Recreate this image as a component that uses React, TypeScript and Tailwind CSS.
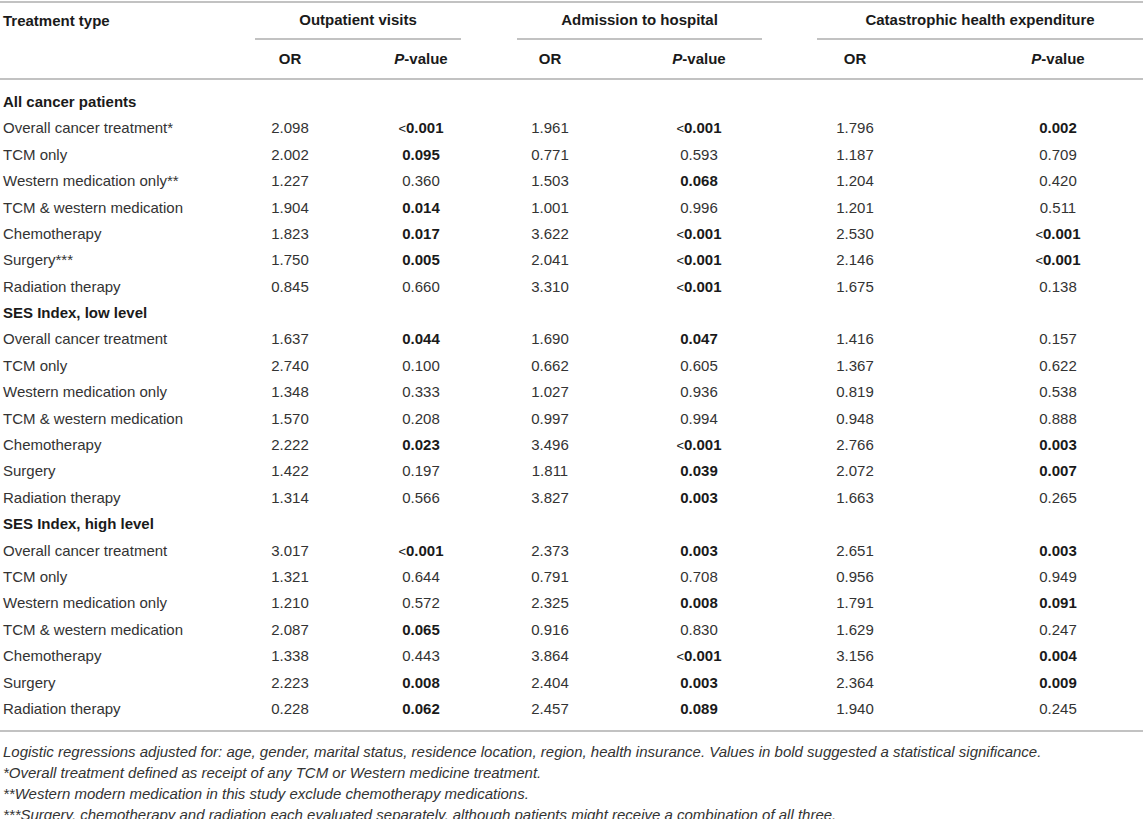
import React from 'react';

type Cell = [string, boolean];
type Row = { label: string; cells: Cell[] };
type Section = { title: string; rows: Row[] };

const r = (label: string, ...vals: (string | boolean)[]): Row => {
  const cells: Cell[] = [];
  for (let i = 0; i < vals.length; i += 2) cells.push([vals[i] as string, vals[i + 1] as boolean]);
  return { label, cells };
};

const sections: Section[] = [
  {
    title: 'All cancer patients',
    rows: [
      r('Overall cancer treatment*', '2.098', false, '<0.001', true, '1.961', false, '<0.001', true, '1.796', false, '0.002', true),
      r('TCM only', '2.002', false, '0.095', true, '0.771', false, '0.593', false, '1.187', false, '0.709', false),
      r('Western medication only**', '1.227', false, '0.360', false, '1.503', false, '0.068', true, '1.204', false, '0.420', false),
      r('TCM & western medication', '1.904', false, '0.014', true, '1.001', false, '0.996', false, '1.201', false, '0.511', false),
      r('Chemotherapy', '1.823', false, '0.017', true, '3.622', false, '<0.001', true, '2.530', false, '<0.001', true),
      r('Surgery***', '1.750', false, '0.005', true, '2.041', false, '<0.001', true, '2.146', false, '<0.001', true),
      r('Radiation therapy', '0.845', false, '0.660', false, '3.310', false, '<0.001', true, '1.675', false, '0.138', false),
    ],
  },
  {
    title: 'SES Index, low level',
    rows: [
      r('Overall cancer treatment', '1.637', false, '0.044', true, '1.690', false, '0.047', true, '1.416', false, '0.157', false),
      r('TCM only', '2.740', false, '0.100', false, '0.662', false, '0.605', false, '1.367', false, '0.622', false),
      r('Western medication only', '1.348', false, '0.333', false, '1.027', false, '0.936', false, '0.819', false, '0.538', false),
      r('TCM & western medication', '1.570', false, '0.208', false, '0.997', false, '0.994', false, '0.948', false, '0.888', false),
      r('Chemotherapy', '2.222', false, '0.023', true, '3.496', false, '<0.001', true, '2.766', false, '0.003', true),
      r('Surgery', '1.422', false, '0.197', false, '1.811', false, '0.039', true, '2.072', false, '0.007', true),
      r('Radiation therapy', '1.314', false, '0.566', false, '3.827', false, '0.003', true, '1.663', false, '0.265', false),
    ],
  },
  {
    title: 'SES Index, high level',
    rows: [
      r('Overall cancer treatment', '3.017', false, '<0.001', true, '2.373', false, '0.003', true, '2.651', false, '0.003', true),
      r('TCM only', '1.321', false, '0.644', false, '0.791', false, '0.708', false, '0.956', false, '0.949', false),
      r('Western medication only', '1.210', false, '0.572', false, '2.325', false, '0.008', true, '1.791', false, '0.091', true),
      r('TCM & western medication', '2.087', false, '0.065', true, '0.916', false, '0.830', false, '1.629', false, '0.247', false),
      r('Chemotherapy', '1.338', false, '0.443', false, '3.864', false, '<0.001', true, '3.156', false, '0.004', true),
      r('Surgery', '2.223', false, '0.008', true, '2.404', false, '0.003', true, '2.364', false, '0.009', true),
      r('Radiation therapy', '0.228', false, '0.062', true, '2.457', false, '0.089', true, '1.940', false, '0.245', false),
    ],
  },
];

const grid = 'grid grid-cols-[227px_126px_136px_122px_176px_136px_220px]';

const Value = ({ v, bold }: { v: string; bold: boolean }) => {
  if (v.startsWith('<')) {
    return (
      <span className={bold ? 'font-bold text-[#1a1a1a]' : ''}>
        <span className="font-normal text-[13px]">&lt;</span>
        {v.slice(1)}
      </span>
    );
  }
  return <span className={bold ? 'font-bold text-[#1a1a1a]' : ''}>{v}</span>;
};

const PValue = () => (
  <span>
    <i>P</i>-value
  </span>
);

export default function App() {
  return (
    <div className="w-[1143px] bg-white text-[15px] text-[#333] font-['Liberation_Sans',Arial,sans-serif] pt-[1px]">
      <div className="border-t-2 border-[#c2c2c2]">
        {/* header row 1 */}
        <div className={`${grid} font-bold text-[#1a1a1a]`}>
          <div className="pl-[3px] h-[37px] flex items-center">Treatment type</div>
          <div className="col-span-2 ml-[28px] mr-[28px] h-[37px] flex items-center justify-center border-b-2 border-[#c2c2c2]">
            Outpatient visits
          </div>
          <div className="col-span-2 ml-[28px] mr-[25px] h-[37px] flex items-center justify-center border-b-2 border-[#c2c2c2]">
            Admission to hospital
          </div>
          <div className="col-span-2 ml-[30px] h-[37px] flex items-center justify-center border-b-2 border-[#c2c2c2]">
            Catastrophic health expenditure
          </div>
        </div>
        {/* header row 2 */}
        <div className={`${grid} font-bold text-[#1a1a1a] h-[40px] items-center border-b-2 border-[#c2c2c2]`}>
          <div />
          <div className="text-center">OR</div>
          <div className="text-center">
            <PValue />
          </div>
          <div className="text-center">OR</div>
          <div className="text-center">
            <PValue />
          </div>
          <div className="text-center">OR</div>
          <div className="text-center pl-[50px]">
            <PValue />
          </div>
        </div>

        <div className="pt-[9px] pb-[8px] border-b-2 border-[#c2c2c2]">
          {sections.map((s) => (
            <div key={s.title}>
              <div className="h-[26.4px] flex items-center pl-[3px] font-bold text-[#1a1a1a]">{s.title}</div>
              {s.rows.map((row, i) => (
                <div key={i} className={`${grid} h-[26.4px] items-center`}>
                  <div className="pl-[3px] whitespace-nowrap">{row.label}</div>
                  {row.cells.map(([v, b], j) => (
                    <div key={j} className={j === 5 ? 'text-center pl-[50px]' : 'text-center'}>
                      <Value v={v} bold={b} />
                    </div>
                  ))}
                </div>
              ))}
            </div>
          ))}
        </div>

        <div className="pl-[3px] pt-[9px] italic text-[15px] leading-[21px] text-[#333]">
          <p className="whitespace-nowrap">
            Logistic regressions adjusted for: age, gender, marital status, residence location, region, health insurance. Values in bold suggested a statistical significance.
          </p>
          <p>*Overall treatment defined as receipt of any TCM or Western medicine treatment.</p>
          <p>**Western modern medication in this study exclude chemotherapy medications.</p>
          <p>***Surgery, chemotherapy and radiation each evaluated separately, although patients might receive a combination of all three.</p>
        </div>
      </div>
    </div>
  );
}
